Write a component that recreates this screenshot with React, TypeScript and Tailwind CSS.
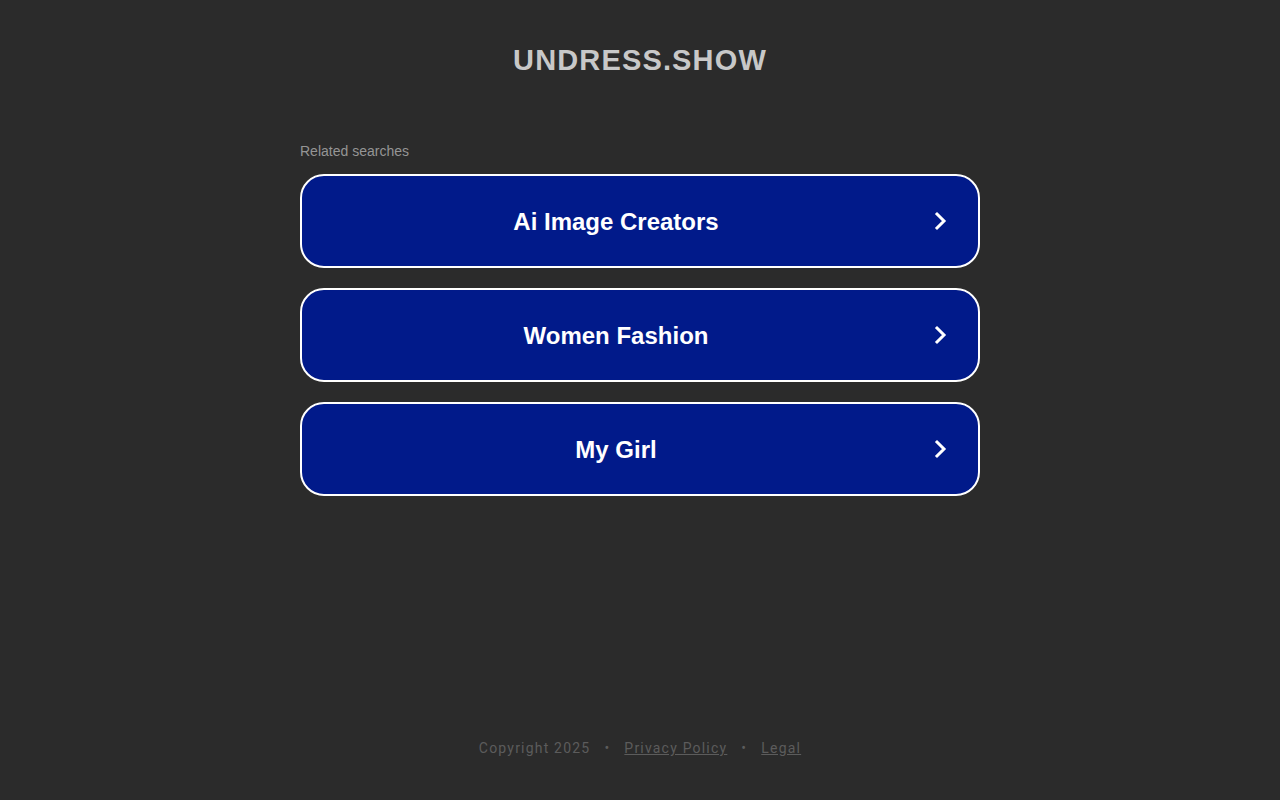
import React from 'react';

const searches = ['Ai Image Creators', 'Women Fashion', 'My Girl'];

export default function App() {
  return (
    <div className="flex min-h-[800px] flex-col items-center bg-[#2b2b2b] font-['Liberation_Sans',Arial,sans-serif]">
      <h1 className="mt-[42px] text-[29px] font-bold leading-[36px] tracking-[1.15px] text-[#c8c8c8]">UNDRESS.SHOW</h1>

      <div className="mt-[64px] w-[680px]">
        <p className="mb-[14px] text-[14px] leading-[18px] text-[#959595]">Related searches</p>
        <div className="flex flex-col gap-[20px]">
          {searches.map((s) => (
            <a
              key={s}
              href="#"
              className="flex h-[94px] items-center rounded-[24px] border-2 border-white bg-[#011a8a] pr-[28px] text-white"
            >
              <span className="flex-1 pt-[2px] text-center text-[24px] font-bold">{s}</span>
              <svg width="20" height="24" viewBox="0 0 20 24" fill="none">
                <path d="M7 5 L14 12 L7 19" stroke="white" strokeWidth="3" strokeLinecap="square" />
              </svg>
            </a>
          ))}
        </div>
      </div>

      <div className="mt-auto mb-[41px] flex items-center gap-[14px] font-['Roboto',sans-serif] text-[14px] tracking-[1.2px] text-[#5c5c5c]">
        <span>Copyright 2025</span>
        <span>•</span>
        <a href="#" className="underline">Privacy Policy</a>
        <span>•</span>
        <a href="#" className="underline">Legal</a>
      </div>
    </div>
  );
}
